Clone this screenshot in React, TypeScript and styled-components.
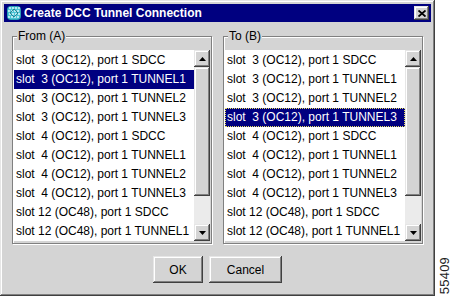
import React from "react";
import styled, { createGlobalStyle, css } from "styled-components";

const FACE = "#d4d4d4";
const NAVY = "#000080";

const GlobalStyle = createGlobalStyle`
  html, body { margin: 0; padding: 0; background: #fff; }
  body { font-family: "Liberation Sans", Arial, sans-serif; }
`;

const raised = css`
  background: ${FACE};
  box-shadow: inset -1px -1px 0 #404040, inset 1px 1px 0 #e6e6e6,
    inset -2px -2px 0 #808080, inset 2px 2px 0 #ffffff;
`;

const Page = styled.div`
  display: flex;
  width: 453px;
  height: 297px;
  overflow: hidden;
`;

const Dialog = styled.div`
  width: 435px;
  height: 296px;
  box-sizing: border-box;
  padding: 4px;
  display: flex;
  flex-direction: column;
  ${raised};
`;

const TitleBar = styled.div`
  height: 18px;
  background: ${NAVY};
  display: flex;
  align-items: center;
  padding: 0 2px;
  gap: 2px;
`;

const Title = styled.div`
  flex: 1;
  color: #fff;
  font-weight: bold;
  font-size: 12px;
  line-height: 18px;
  white-space: nowrap;
`;

const CloseButton = styled.div`
  width: 15px;
  height: 14px;
  display: flex;
  align-items: center;
  justify-content: center;
  ${raised};
`;

const Body = styled.div`
  display: flex;
  gap: 11px;
  padding: 14px 8px 0;
`;

const Group = styled.div`
  position: relative;
  width: 200px;
  height: 208px;
  box-sizing: border-box;
  border: 1px solid #808080;
  box-shadow: inset 1px 1px 0 #fff, 1px 1px 0 #fff;
  padding: 13px 1px 2px 1px;
`;

const Legend = styled.div`
  position: absolute;
  top: -8px;
  left: 4px;
  padding: 0 1px;
  background: ${FACE};
  font-size: 12px;
  line-height: 14px;
  color: #000;
`;

const ListBox = styled.div`
  display: flex;
  width: 196px;
  height: 191px;
  background: #fff;
`;

const Rows = styled.div`
  flex: 1;
  overflow: hidden;
  padding-top: 0.5px;
`;

const Row = styled.div<{ $selected?: boolean; $focus?: boolean }>`
  height: 19px;
  line-height: 19px;
  padding-left: 2px;
  font-size: 12px;
  white-space: pre;
  color: ${(p) => (p.$selected ? "#fff" : "#000")};
  background: ${(p) => (p.$selected ? NAVY : "transparent")};
  ${(p) =>
    p.$focus &&
    css`
      outline: 1px dotted #e8e060;
      outline-offset: -1px;
    `}
`;

const ScrollBar = styled.div`
  width: 16px;
  display: flex;
  flex-direction: column;
  background: #ebebeb;
`;

const ScrollButton = styled.div`
  height: 17px;
  display: flex;
  align-items: center;
  justify-content: center;
  ${raised};
`;

const Thumb = styled.div`
  height: 129px;
  ${raised};
`;

const Track = styled.div`
  flex: 1;
`;

const ButtonRow = styled.div`
  display: flex;
  justify-content: center;
  gap: 6px;
  margin-top: 12px;
`;

const PushButton = styled.div<{ $w: number }>`
  width: ${(p) => p.$w}px;
  height: 27px;
  display: flex;
  align-items: center;
  justify-content: center;
  font-size: 12px;
  color: #000;
  ${raised};
`;

const Side = styled.div`
  flex: 1;
  display: flex;
  align-items: flex-end;
  justify-content: center;
  padding-bottom: 3px;
`;

const Stamp = styled.div`
  writing-mode: vertical-rl;
  transform: rotate(180deg);
  font-size: 13px;
  line-height: 13px;
  color: #222;
  letter-spacing: 0.2px;
`;

const Arrow = ({ up }: { up?: boolean }) => (
  <svg width="7" height="4" viewBox="0 0 7 4">
    <polygon points={up ? "3.5,0 7,4 0,4" : "0,0 7,0 3.5,4"} fill="#000" />
  </svg>
);

const AppIcon = () => (
  <svg width="16" height="16" viewBox="0 0 16 16">
    <rect x="1" y="1" width="14" height="14" rx="4" fill="#2a9fb5" />
    <rect x="2" y="2" width="12" height="12" rx="3" fill="#4cc3d4" />
    {[3, 6, 9, 12].map((x) =>
      [3, 6, 9, 12].map((y) => (
        <circle key={`${x}-${y}`} cx={x + ((y / 3) % 2) * 1} cy={y} r="0.9" fill="#e8fbff" />
      ))
    )}
    <path d="M4 8 L8 4 L12 8 L8 12 Z" fill="none" stroke="#1a6f80" strokeWidth="0.8" />
  </svg>
);

const CloseIcon = () => (
  <svg width="8" height="7" viewBox="0 0 8 7">
    <path d="M0.5 0.5 L7.5 6.5 M7.5 0.5 L0.5 6.5" stroke="#000" strokeWidth="1.8" />
  </svg>
);

const items = [
  "slot  3 (OC12), port 1 SDCC",
  "slot  3 (OC12), port 1 TUNNEL1",
  "slot  3 (OC12), port 1 TUNNEL2",
  "slot  3 (OC12), port 1 TUNNEL3",
  "slot  4 (OC12), port 1 SDCC",
  "slot  4 (OC12), port 1 TUNNEL1",
  "slot  4 (OC12), port 1 TUNNEL2",
  "slot  4 (OC12), port 1 TUNNEL3",
  "slot 12 (OC48), port 1 SDCC",
  "slot 12 (OC48), port 1 TUNNEL1",
];

const List = ({ selected, focus }: { selected: number; focus?: boolean }) => (
  <ListBox>
    <Rows>
      {items.map((t, i) => (
        <Row key={i} $selected={i === selected} $focus={focus && i === selected}>
          {t}
        </Row>
      ))}
    </Rows>
    <ScrollBar>
      <ScrollButton>
        <Arrow up />
      </ScrollButton>
      <Thumb />
      <Track />
      <ScrollButton>
        <Arrow />
      </ScrollButton>
    </ScrollBar>
  </ListBox>
);

export default function App() {
  return (
    <>
      <GlobalStyle />
      <Page>
        <Dialog>
          <TitleBar>
            <AppIcon />
            <Title>Create DCC Tunnel Connection</Title>
            <CloseButton>
              <CloseIcon />
            </CloseButton>
          </TitleBar>
          <Body>
            <Group>
              <Legend>From (A)</Legend>
              <List selected={1} />
            </Group>
            <Group>
              <Legend>To (B)</Legend>
              <List selected={3} focus />
            </Group>
          </Body>
          <ButtonRow>
            <PushButton $w={50}>OK</PushButton>
            <PushButton $w={73}>Cancel</PushButton>
          </ButtonRow>
        </Dialog>
        <Side>
          <Stamp>55409</Stamp>
        </Side>
      </Page>
    </>
  );
}
